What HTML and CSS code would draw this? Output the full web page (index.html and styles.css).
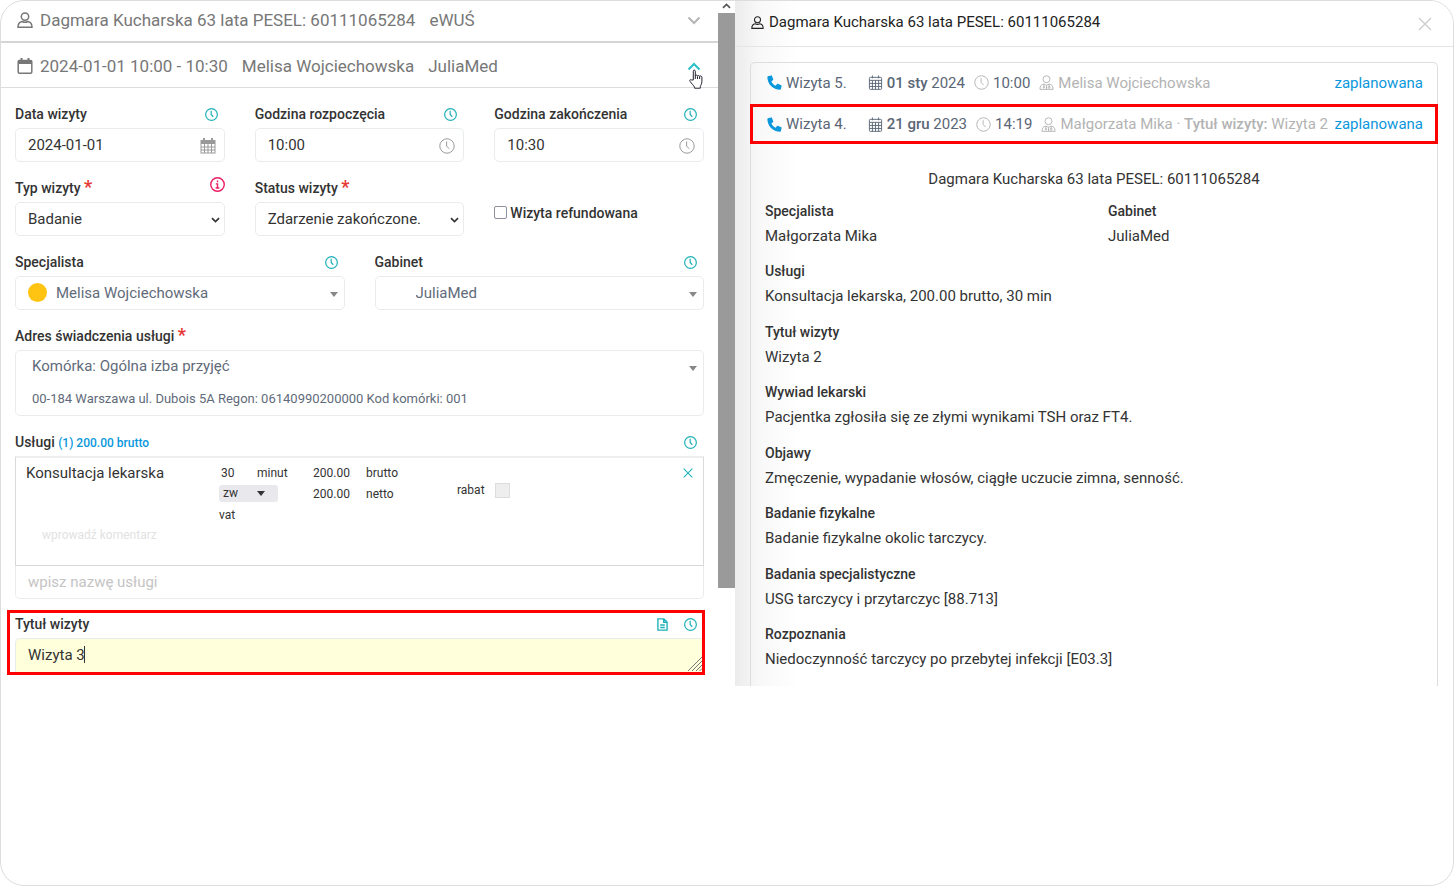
FILE: index.html
```html
<!DOCTYPE html>
<html lang="pl">
<head>
<meta charset="utf-8">
<meta name="viewport" content="width=device-width, initial-scale=1">
<title>Wizyta</title>
<link rel="stylesheet" href="styles.css">
</head>
<body>
<svg class="sprite" aria-hidden="true">
  <symbol id="i-clock" viewBox="0 0 16 16"><circle cx="8" cy="8" r="7.2"/><path d="M7.6 3.4V8l2.6 2.8"/></symbol>
  <symbol id="i-person" viewBox="0 0 16 16"><circle cx="8" cy="4.6" r="3.7"/><path d="M1 15.2c0-4 1.6-5.3 4.2-5.7 1.8 1 3.8 1 5.6 0 2.600.4 4.200 1.700 4.200 5.700z"/></symbol>
  <symbol id="i-doctor" viewBox="0 0 16 16"><circle cx="8" cy="4.500" r="3.700"/><path d="M1 15.300c0-3.800 1.500-5.100 4.200-5.600L8 11l2.800-1.300c2.700.5 4.200 1.800 4.200 5.600zM5.200 9.700v3.300M10.800 9.700v3M8 11v4"/><circle cx="5.200" cy="13.200" r=".7"/><circle cx="10.800" cy="13.200" r="1"/></symbol>
  <symbol id="i-grid" viewBox="0 0 16 16"><rect x="1.500" y="2.500" width="13" height="12.800" rx="1"/><path d="M1.500 5.700h13M1.500 9h13M1.500 12.200h13M4.700 5.700v9.500M8 5.700v9.500M11.300 5.700v9.500M4.700.5v3M11.300.5v3"/></symbol>
  <symbol id="i-phone" viewBox="0 0 16 16"><path d="M1 1.200 4.300.4c.4-.1.700.1.900.5l1.500 3.500c.1.300 0 .7-.2.900L4.600 6.800c1 2 2.600 3.600 4.600 4.600l1.500-1.900c.2-.2.600-.3.900-.2l3.500 1.500c.4.200.6.500.5.900l-.8 3.300c-.1.400-.4.600-.8.600C6.400 15.600.4 9.600.4 2c0-.4.2-.7.6-.8z"/></symbol>
  <symbol id="i-chev" viewBox="0 0 14 9"><path d="M1.500 1.500 7 7l5.500-5.500"/></symbol>
  <symbol id="i-tri" viewBox="0 0 8 5"><path d="M0 0h8L4 5z"/></symbol>
  <symbol id="i-x" viewBox="0 0 14 14"><path d="M1 1l12 12M13 1 1 13"/></symbol>
</svg>

<div class="frame">
  <div class="split">
    <main class="editor">
      <header class="bar">
        <svg class="bar-icon line thick"><use href="#i-person"/></svg>
        <span>Dagmara Kucharska 63 lata PESEL: 60111065284</span><span>eWUŚ</span>
        <button class="toggle" type="button" aria-label="Rozwiń"><svg class="chev"><use href="#i-chev"/></svg></button>
      </header>
      <header class="bar bar-open">
        <svg class="bar-icon line thick" viewBox="0 0 16 16"><rect x="1.200" y="2.500" width="13.600" height="12.700" rx="1.200"/><path class="solid" d="M1 2h14v4H1zM3.500 0h2v3h-2zM10.500 0h2v3h-2z"/></svg>
        <span>2024-01-01 10:00 - 10:30</span><span>Melisa Wojciechowska</span><span>JuliaMed</span>
        <button class="toggle teal" type="button" aria-label="Zwiń"><svg class="chev up"><use href="#i-chev"/></svg></button>
        <svg class="cursor" viewBox="0 0 14 20"><path d="M4.300 11V2.200c0-1.500 2-1.500 2 0V7c0-1.200 2.200-1.200 2.200.2 0-1 2.100-1 2.100.4 0-1 2.300-1 2.300.6v4.500c0 2-1.200 3.300-1.600 5v1.500H5.600v-1C4.600 16.500 2.500 14.500 1 12.300c-.8-1.200.6-2.300 1.700-1.300z"/><path d="M6.300 7v3M8.500 7.500V10M10.600 8v2"/></svg>
      </header>

      <form class="form">
        <div class="row three">
          <div class="field">
            <div class="caption"><label for="date">Data wizyty</label><svg class="hist line"><use href="#i-clock"/></svg></div>
            <div class="control"><input id="date" type="text" value="2024-01-01"><svg class="inner line cal" viewBox="0 0 16 16"><rect x="1" y="2.500" width="14" height="12.500"/><path class="solid" d="M1 2h14v4H1zM3 0h2v3H3zM11 0h2v3h-2z"/><path d="M1 9h14M1 12h14M4.500 6v9M8 6v9M11.500 6v9"/></svg></div>
          </div>
          <div class="field">
            <div class="caption"><label for="from">Godzina rozpoczęcia</label><svg class="hist line"><use href="#i-clock"/></svg></div>
            <div class="control"><input id="from" type="text" value="10:00"><svg class="inner line"><use href="#i-clock"/></svg></div>
          </div>
          <div class="field">
            <div class="caption"><label for="to">Godzina zakończenia</label><svg class="hist line"><use href="#i-clock"/></svg></div>
            <div class="control"><input id="to" type="text" value="10:30"><svg class="inner line"><use href="#i-clock"/></svg></div>
          </div>
        </div>

        <div class="row three">
          <div class="field">
            <div class="caption caption-info"><label for="type">Typ wizyty <b class="req">*</b></label><svg class="info line" viewBox="0 0 16 16"><circle cx="8" cy="8" r="7.200"/><path d="M8 3.800v1.700M6.200 7.300H8v4.200M6 11.800h4"/></svg></div>
            <div class="control"><select id="type"><option>Badanie</option></select><svg class="arrow"><use href="#i-chev"/></svg></div>
          </div>
          <div class="field">
            <div class="caption"><label for="status">Status wizyty <b class="req">*</b></label></div>
            <div class="control"><select id="status"><option>Zdarzenie zakończone.</option></select><svg class="arrow"><use href="#i-chev"/></svg></div>
          </div>
          <div class="field check">
            <input id="refund" type="checkbox"><label for="refund">Wizyta refundowana</label>
          </div>
        </div>

        <div class="row two">
          <div class="field">
            <div class="caption"><label for="spec">Specjalista</label><svg class="hist line"><use href="#i-clock"/></svg></div>
            <div class="control soft"><select id="spec"><option>Melisa Wojciechowska</option></select><i class="dot"></i><svg class="tri"><use href="#i-tri"/></svg></div>
          </div>
          <div class="field">
            <div class="caption"><label for="room">Gabinet</label><svg class="hist line"><use href="#i-clock"/></svg></div>
            <div class="control soft"><select id="room"><option>JuliaMed</option></select><svg class="tri"><use href="#i-tri"/></svg></div>
          </div>
        </div>

        <div class="field">
          <div class="caption"><label for="addr">Adres świadczenia usługi <b class="req">*</b></label></div>
          <div class="control">
            <button class="address" id="addr" type="button"><span>Komórka: Ogólna izba przyjęć</span><small>00-184 Warszawa ul. Dubois 5A Regon: 06140990200000 Kod komórki: 001</small></button>
            <svg class="tri"><use href="#i-tri"/></svg>
          </div>
        </div>

        <div class="field">
          <div class="caption"><label for="service">Usługi <a href="#service">(1) 200.00 brutto</a></label><svg class="hist line"><use href="#i-clock"/></svg></div>
          <div class="services">
            <div class="service">
              <span class="s-name">Konsultacja lekarska</span>
              <label class="s-min"><input type="text" value="30">minut</label>
              <input class="s-num" type="text" value="200.00" aria-label="Cena brutto"><span class="s-unit">brutto</span>
              <div class="s-vat control"><select id="vat"><option>zw</option></select><svg class="tri"><use href="#i-tri"/></svg></div>
              <input class="s-num" type="text" value="200.00" aria-label="Cena netto"><span class="s-unit">netto</span>
              <label class="s-rabat">rabat <input type="checkbox"></label>
              <label class="s-label" for="vat">vat</label>
              <button class="s-del" type="button" aria-label="Usuń"><svg class="line"><use href="#i-x"/></svg></button>
            </div>
            <input class="comment" type="text" placeholder="wprowadź komentarz" aria-label="Komentarz">
          </div>
          <div class="control"><input class="add" id="service" type="text" placeholder="wpisz nazwę usługi"></div>
        </div>

        <div class="field marked">
          <div class="caption"><label for="title">Tytuł wizyty</label><svg class="doc line" viewBox="0 0 12 14"><path d="M1 .8h6.500L11 4.300v8.900H1zM7.300 1v3.500H11M3.500 7.500h5M3.500 10.300h5"/></svg><svg class="hist line"><use href="#i-clock"/></svg></div>
          <div class="control">
            <textarea id="title" rows="1">Wizyta 3</textarea><i class="caret"></i>
            <svg class="grip" viewBox="0 0 14 14"><path d="M0 14 14 0M4 14 14 4M8 14l6-6M11.500 14l2.500-2.500"/></svg>
          </div>
        </div>
      </form>
    </main>

    <div class="scroll" aria-hidden="true"><svg class="scroll-up"><use href="#i-chev"/></svg><div class="thumb"></div></div>

    <aside class="history">
      <header class="h-head">
        <svg class="line"><use href="#i-person"/></svg><span>Dagmara Kucharska 63 lata PESEL: 60111065284</span>
        <button type="button" aria-label="Zamknij"><svg class="line"><use href="#i-x"/></svg></button>
      </header>
      <section class="card">
        <div class="visit">
          <svg class="phone"><use href="#i-phone"/></svg><span class="v-name">Wizyta 5.</span>
          <svg class="line"><use href="#i-grid"/></svg><span class="v-date"><b>01 sty</b> 2024</span>
          <svg class="line pale"><use href="#i-clock"/></svg><span class="v-time">10:00</span>
          <svg class="line pale"><use href="#i-doctor"/></svg><span class="pale">Melisa Wojciechowska</span>
          <a href="#v5">zaplanowana</a>
        </div>
        <div class="visit visit-marked">
          <svg class="phone"><use href="#i-phone"/></svg><span class="v-name">Wizyta 4.</span>
          <svg class="line"><use href="#i-grid"/></svg><span class="v-date"><b>21 gru</b> 2023</span>
          <svg class="line pale"><use href="#i-clock"/></svg><span class="v-time">14:19</span>
          <svg class="line pale"><use href="#i-doctor"/></svg><span class="pale">Małgorzata Mika · <b>Tytuł wizyty:</b> Wizyta 2</span>
          <a href="#v4">zaplanowana</a>
        </div>
        <p class="who">Dagmara Kucharska 63 lata PESEL: 60111065284</p>
        <dl class="details">
          <div class="pair"><div><dt>Specjalista</dt><dd>Małgorzata Mika</dd></div><div><dt>Gabinet</dt><dd>JuliaMed</dd></div></div>
          <div><dt>Usługi</dt><dd>Konsultacja lekarska, 200.00 brutto, 30 min</dd></div>
          <div><dt>Tytuł wizyty</dt><dd>Wizyta 2</dd></div>
          <div><dt>Wywiad lekarski</dt><dd>Pacjentka zgłosiła się ze złymi wynikami TSH oraz FT4.</dd></div>
          <div><dt>Objawy</dt><dd>Zmęczenie, wypadanie włosów, ciągłe uczucie zimna, senność.</dd></div>
          <div><dt>Badanie fizykalne</dt><dd>Badanie fizykalne okolic tarczycy.</dd></div>
          <div><dt>Badania specjalistyczne</dt><dd>USG tarczycy i przytarczyc [88.713]</dd></div>
          <div><dt>Rozpoznania</dt><dd>Niedoczynność tarczycy po przebytej infekcji [E03.3]</dd></div>
        </dl>
      </section>
    </aside>
  </div>
</div>
</body>
</html>
```
FILE: styles.css
```css
* { box-sizing: border-box; }
body { margin: 0; background: #fff; color: #333; font: 15px/24px Roboto, sans-serif; }
input, select, textarea, button { font: inherit; color: inherit; margin: 0; }
button { padding: 0; border: 0; background: none; cursor: pointer; }
a { color: #0a97dc; text-decoration: none; }
svg { display: block; flex: none; fill: currentColor; }
.sprite { position: absolute; width: 0; height: 0; }
.line { fill: none; stroke: currentColor; }
.thick { stroke-width: 1.5; }
.solid { fill: currentColor; stroke: none; }

.frame { min-height: 100vh; border: 1px solid #ddd; border-radius: 24px; overflow: hidden; }
.split { display: grid; grid-template-columns: minmax(0, 717fr) 17px minmax(0, 718fr); }

/* collapsible headers */
.bar { position: relative; display: flex; align-items: center; gap: 14px; height: 42px; padding: 0 17px 2px 16px; border-bottom: 2px solid #d5d5d5; color: #777; font-size: 17px; }
.bar-open { height: 45px; padding-top: 2px; padding-bottom: 0; border-bottom: 1px solid #ddd; }
.bar-icon { width: 16px; height: 16px; margin-right: -7px; }
.toggle { margin-left: auto; color: #b5b5b5; }
.chev { width: 14px; height: 9px; fill: none; stroke: currentColor; stroke-width: 2; }
.up { transform: rotate(180deg); }
.teal { color: #2bc0c9; }
.cursor { position: absolute; right: 15px; bottom: -2px; width: 14px; height: 20px; fill: #fff; stroke: #223; }

/* visit form */
.form { display: flex; flex-direction: column; gap: 16px; padding: 16px 14px 13px; }
.row { display: grid; gap: 30px; }
.three { grid-template-columns: repeat(3, minmax(0, 1fr)); }
.two { grid-template-columns: repeat(2, minmax(0, 1fr)); }
.caption { display: flex; align-items: center; height: 24px; padding: 0 7px 4px 0; font-size: 14px; font-weight: 500; }
.caption label { margin-right: auto; }
.caption a { font-size: 12px; }
.caption-info { padding-right: 0; }
.req { color: #e53935; font-size: 18px; line-height: 18px; }
.hist { width: 13px; height: 13px; color: #1fb1b9; stroke-width: 1.5; }
.info { width: 15px; height: 15px; margin-bottom: 8px; color: #e91e63; stroke-width: 1.5; }
.doc { width: 11px; height: 13px; margin-right: 16px; color: #1fb1b9; stroke-width: 1.5; }
.control { position: relative; }
.control > input, .control > select, .control > textarea { display: block; width: 100%; height: 34px; padding: 0 12px; border: 1px solid #e9ecef; border-radius: 5px; background: #fff; appearance: none; outline: 0; }
.inner { position: absolute; right: 9px; top: 10px; width: 16px; height: 16px; color: #999; }
.cal { stroke-width: 1; }
.arrow { position: absolute; right: 5px; top: 15px; width: 9px; height: 6px; fill: none; stroke: #333; stroke-width: 2.5; }
.tri { position: absolute; right: 7px; top: 16px; width: 8px; height: 5px; color: #888; }
.soft > select { padding-left: 40px; color: #5f6b7a; }
.dot { position: absolute; left: 13px; top: 7px; width: 19px; height: 19px; border-radius: 50%; background: #ffc312; }
.check { display: flex; align-items: center; gap: 3px; padding-top: 11px; font-size: 14px; font-weight: 500; }
.check input { width: 13px; height: 13px; border: 1px solid #8f8f9d; border-radius: 2px; appearance: none; }
.address { display: flex; flex-direction: column; gap: 9px; width: 100%; padding: 3px 16px 4px; border: 1px solid #e9ecef; border-radius: 5px; color: #5f6b7a; text-align: left; }
.address small { font-size: 13px; }

.services { border: 1px solid #d9d9d9; border-top: 2px solid #eee; padding: 4px 10px 20px; }
.service { display: grid; grid-template-columns: 193px 94px 53px 91px 1fr 16px; grid-auto-rows: 21px; font-size: 12px; line-height: 22px; }
.s-name { grid-area: 1 / 1; font-size: 15px; }
.s-min { grid-area: 1 / 2; display: flex; }
.service input[type=text] { width: 38px; padding: 0; border: 0; background: none; }
.s-min input[type=text] { padding-left: 2px; }
.s-num { grid-column: 3; }
.s-unit { grid-column: 4; }
.s-vat { grid-area: 2 / 2; padding-top: 2px; }
.s-vat > select { width: 59px; height: 17px; padding: 0 4px; border: 0; border-radius: 3px; background: #e9e9ed; line-height: 15px; }
.s-vat .tri { right: auto; left: 38px; top: 8px; color: #333; }
.s-label { grid-area: 3 / 2; }
.s-rabat { grid-area: 2 / 5; display: flex; gap: 10px; line-height: 15px; }
.s-rabat input { width: 15px; height: 15px; border: 1px solid #ddd; background: #eee; appearance: none; }
.s-del { grid-area: 1 / 6; color: #1fb1b9; }
.s-del svg { width: 10px; height: 10px; margin-left: auto; stroke-width: 1.5; }
.comment { display: block; width: 100%; height: 20px; padding: 0 16px; border: 0; background: none; font-size: 12px; }
.comment::placeholder { color: #e2e2e2; }
.control > .add { height: 33px; border-top: 0; border-radius: 0 0 5px 5px; }
.add::placeholder { color: #c4c4c4; }

.marked { margin: -5px -1px -2px -8px; padding: 1px 0 0 5px; border: 3px solid #f00; }
.marked .caption { padding-right: 5px; }
.control > textarea { padding-top: 4px; border-width: 1px 0 0 1px; border-radius: 5px 0 0 0; background: #ffffdc; resize: none; overflow: hidden; }
.caret { position: absolute; left: 69px; top: 8px; width: 1px; height: 17px; background: #333; }
.grip { position: absolute; right: 0; bottom: 1px; width: 14px; height: 14px; fill: none; stroke: #777; }

/* scrollbar column */
.scroll { display: flex; flex-direction: column; align-items: center; }
.scroll-up { width: 9px; height: 6px; margin: 2px 0 4px; fill: none; stroke: #555; stroke-width: 2.5; transform: rotate(180deg); }
.thumb { width: 100%; height: 84%; background: #9a9a9a; }

/* visit history */
.history { display: flex; flex-direction: column; background: linear-gradient(to right, #ececec, #f8f8f8 24px, #fff 64px); }
.h-head { display: flex; align-items: center; gap: 5px; height: 46px; padding: 0 21px 3px 16px; border-bottom: 1px solid #e5e5e5; color: #222; }
.h-head > svg { width: 13px; height: 13px; stroke-width: 1.3; }
.h-head button { margin: 4px 0 0 auto; color: #ccc; }
.h-head button svg { width: 14px; height: 14px; stroke-width: 1.3; }
.card { flex: 1; display: flex; flex-direction: column; margin: 15px 15px 0; border: 1px solid #ddd; border-bottom: 0; border-radius: 5px 5px 0 0; }
.visit { display: flex; align-items: center; height: 41px; padding: 0 14px 2px 16px; color: #5a6675; white-space: nowrap; }
.visit svg { width: 15px; height: 15px; margin-right: 4px; }
.visit b { font-weight: 500; }
.visit .phone { color: #0a97dc; }
.visit .pale { color: #b3b3b3; }
.visit a { margin-left: auto; }
.v-name { margin-right: 21px; }
.v-date, .v-time { margin-right: 9px; }
.visit-marked { height: 40px; margin: 0 -1px; padding: 0 12px 0 14px; border: 3px solid #f00; }
.who { margin: 23px 0 8px; text-align: center; }
.details { flex: 1; display: flex; flex-direction: column; justify-content: space-between; margin: 0 14px; padding-bottom: 14px; }
.pair { display: grid; grid-template-columns: repeat(2, 1fr); gap: 28px; }
dt { font-size: 14px; font-weight: 500; line-height: 25px; }
dd { margin: 0; line-height: 25px; }
```
